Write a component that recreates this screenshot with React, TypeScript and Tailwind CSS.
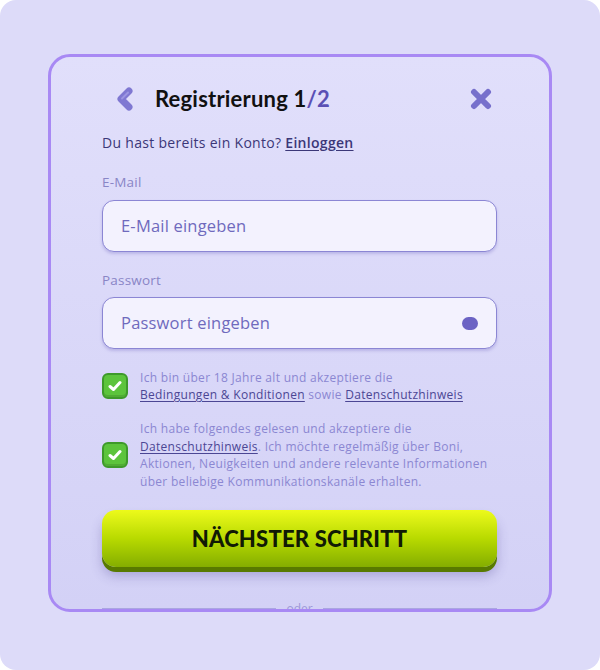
import React from "react";

function Check() {
  return (
    <div className="w-[26px] h-[26px] shrink-0 rounded-[6px] bg-[#5cc43c] border-2 border-[#3e9a2a] flex items-center justify-center shadow-[inset_0_-2px_0_rgba(0,0,0,0.12)]">
      <svg width="14" height="12" viewBox="0 0 14 12">
        <path d="M2 6.5 L5.5 9.5 L12 2.5" fill="none" stroke="#ffffff" strokeWidth="3" strokeLinecap="round" strokeLinejoin="round" />
      </svg>
    </div>
  );
}

const body = { fontFamily: "'Open Sans', 'Noto Sans', sans-serif" };

export default function App() {
  return (
    <div className="w-[600px] h-[670px] bg-white" style={{ fontFamily: "Lato, 'Noto Sans', sans-serif" }}>
      <div className="w-[600px] h-[670px] rounded-[16px] bg-[#dddbf9] pt-[54px] pl-[48px]">
        <div className="w-[504px] h-[558px] rounded-[22px] border-[3px] border-[#a889f4] overflow-hidden bg-gradient-to-b from-[#e1dffb] to-[#d3d1f6] pl-[51px] pr-[52px] pt-[28px]">
          {/* header */}
          <div className="h-[28px] flex items-center">
            <div className="w-[53px] flex items-center pl-[13px]">
              <svg width="20" height="26" viewBox="0 0 20 26">
                <path d="M14 5 L6 13 L14 21" fill="none" stroke="#7f78d2" strokeWidth="7" strokeLinecap="round" strokeLinejoin="round" />
                <path d="M13 6.5 L7 12.5" fill="none" stroke="#9c96e2" strokeWidth="2" strokeLinecap="round" />
              </svg>
            </div>
            <div className="flex-1 text-[22px] font-bold text-[#111111] leading-none tracking-[0.2px]">
              Registrierung 1<span className="text-[#5a50b5]">/2</span>
            </div>
            <div className="pr-[4px] flex items-center">
              <svg width="24" height="22" viewBox="0 0 24 22">
                <path d="M5 4 L19 18 M19 4 L5 18" fill="none" stroke="#7770cc" strokeWidth="6" strokeLinecap="round" />
              </svg>
            </div>
          </div>

          <div className="mt-[20px] text-[14px] leading-[20px] tracking-[0.3px] text-[#3b3778]" style={body}>
            Du hast bereits ein Konto?{" "}
            <span className="font-semibold underline underline-offset-2">Einloggen</span>
          </div>

          <div className="mt-[19px] text-[13.5px] leading-[20px] tracking-[0.2px] text-[#8985c6]" style={body}>E-Mail</div>
          <div className="mt-[8px] h-[52px] rounded-[12px] border border-[#8b86d4] bg-[#f3f2fe] shadow-[0_2px_3px_rgba(90,80,180,0.25)] flex items-center px-[18px]">
            <span className="text-[16.5px] tracking-[0.2px] text-[#6f6abd]" style={body}>E-Mail eingeben</span>
          </div>

          <div className="mt-[18px] text-[13.5px] leading-[20px] tracking-[0.2px] text-[#8985c6]" style={body}>Passwort</div>
          <div className="mt-[7px] h-[52px] rounded-[12px] border border-[#8b86d4] bg-[#f3f2fe] shadow-[0_2px_3px_rgba(90,80,180,0.25)] flex items-center justify-between pl-[18px] pr-[18px]">
            <span className="text-[16.5px] tracking-[0.2px] text-[#6f6abd]" style={body}>Passwort eingeben</span>
            <div className="w-[16px] h-[13px] rounded-full bg-[#6b63c4]" />
          </div>

          <div className="mt-[20px] flex items-center gap-[12px]">
            <Check />
            <div className="text-[12px] leading-[17px] tracking-[0.3px] text-[#8b87d2]" style={body}>
              Ich bin über 18 Jahre alt und akzeptiere die
              <br />
              <span className="text-[#4b4694] underline underline-offset-2">Bedingungen &amp; Konditionen</span> sowie{" "}
              <span className="text-[#4b4694] underline underline-offset-2">Datenschutzhinweis</span>
            </div>
          </div>

          <div className="mt-[17px] flex items-center gap-[12px]">
            <Check />
            <div className="text-[12px] leading-[17.7px] tracking-[0.3px] text-[#8b87d2]" style={body}>
              Ich habe folgendes gelesen und akzeptiere die
              <br />
              <span className="text-[#4b4694] underline underline-offset-2">Datenschutzhinweis</span>. Ich möchte regelmäßig über Boni,
              <br />
              Aktionen, Neuigkeiten und andere relevante Informationen
              <br />
              über beliebige Kommunikationskanäle erhalten.
            </div>
          </div>

          <div className="mt-[19px] h-[57px] rounded-[14px] bg-gradient-to-b from-[#edfa1a] via-[#b8da00] to-[#84ae00] shadow-[0_5px_0_#587a00,0_9px_12px_rgba(70,60,140,0.3)] flex items-center justify-center">
            <span className="text-[22px] font-black text-[#111a05] tracking-[0.2px]">NÄCHSTER SCHRITT</span>
          </div>

          <div className="mt-[35px] flex items-center gap-[10px]">
            <div className="flex-1 h-px bg-[#aaa6e0]" />
            <span className="text-[12px] text-[#9c98d8] leading-[14px]" style={body}>oder</span>
            <div className="flex-1 h-px bg-[#aaa6e0]" />
          </div>
        </div>
      </div>
    </div>
  );
}
